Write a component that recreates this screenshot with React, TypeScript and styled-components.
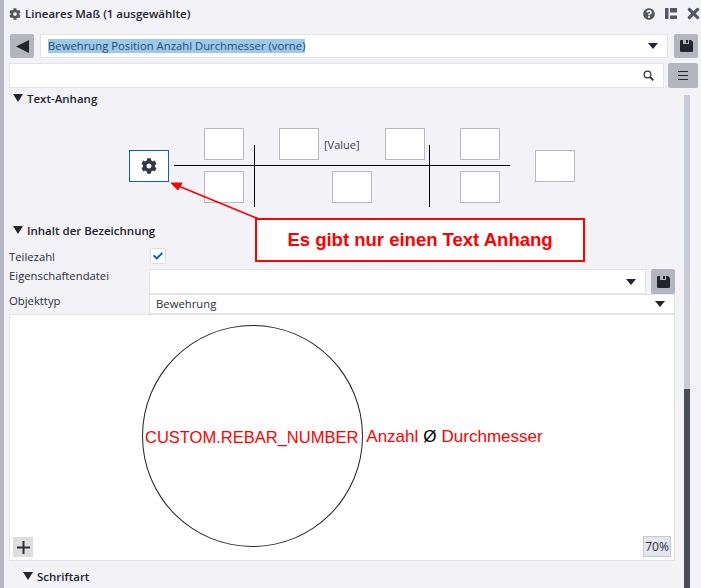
import React from "react";
import styled, { createGlobalStyle } from "styled-components";
import { FaCog, FaQuestionCircle, FaTimes, FaCheck } from "react-icons/fa";

const GlobalStyle = createGlobalStyle`
  html, body {
    margin: 0;
    padding: 0;
    background: #f2f2f7;
    overflow: hidden;
  }
  * { box-sizing: border-box; }
`;

const Window = styled.div`
  position: relative;
  width: 701px;
  height: 588px;
  overflow: hidden;
  background: #f2f2f7;
  border-left: 4px solid #b6b6c2;
  font-family: "Open Sans", "Noto Sans", sans-serif;
  font-size: 11.3px;
  color: #2b2d3a;
`;

const TitleBar = styled.div`
  height: 34px;
  padding: 0 2px 7px 5px;
  display: flex;
  align-items: center;
  gap: 4px;
  font-weight: 600;
  font-size: 11.5px;
  color: #23242e;

  svg { color: #555862; flex: none; }
`;

const TitleText = styled.span`
  flex: 1;
`;

const TitleIcons = styled.div`
  display: flex;
  align-items: center;
  gap: 10px;
  svg { display: block; }
  svg:last-child { margin: 0 -3px 0 -2px; }
`;

const SelectorRow = styled.div`
  height: 24px;
  padding: 0 3px 0 6px;
  display: flex;
  gap: 6px;
`;

const SearchRow = styled.div`
  height: 25px;
  margin-top: 5px;
  padding: 0 3px 0 5px;
  display: flex;
  gap: 4px;
`;

const SquareButton = styled.div<{ $width?: number }>`
  flex: none;
  width: ${(p) => p.$width ?? 24}px;
  display: flex;
  align-items: center;
  justify-content: center;
  border-radius: 2px;
  background: #b4b6bf;
  color: #23242e;
`;

const Field = styled.div`
  flex: 1;
  min-width: 0;
  display: flex;
  align-items: center;
  justify-content: space-between;
  background: #fff;
  border: 1px solid #e2e2ea;
  padding: 0 9px 0 7px;
`;

const Selected = styled.span`
  background: #9cc9ee;
  color: #2b4a6a;
  line-height: 14px;
`;

const FieldValue = styled.span`
  margin: -2px 0 0 -1px;
`;

const Caret = styled.span`
  width: 0;
  height: 0;
  border-left: 5px solid transparent;
  border-right: 5px solid transparent;
  border-top: 6px solid #23242e;
`;

const Content = styled.div`
  display: flex;
  height: 501px;
  margin-top: -1px;
`;

const Main = styled.div`
  width: 680px;
`;

const Scrollbar = styled.div`
  width: 6px;
  margin-top: 8px;
  height: 493px;
  display: flex;
  flex-direction: column;
  background: #c9cbd4;
  justify-content: flex-end;
`;

const ScrollThumb = styled.div`
  height: 199px;
  background: #4a4e55;
`;

const SectionHeader = styled.div<{ $indent?: number; $top?: number }>`
  height: 22px;
  margin-top: ${(p) => p.$top ?? 0}px;
  padding-left: ${(p) => p.$indent ?? 9}px;
  display: flex;
  align-items: center;
  gap: 4px;
  font-weight: 600;
  font-size: 11.5px;
  color: #23242e;
`;

const Triangle = styled.span`
  width: 0;
  height: 0;
  border-left: 5px solid transparent;
  border-right: 5px solid transparent;
  border-top: 8px solid #23242e;
`;

const Diagram = styled.div`
  position: relative;
  height: 110px;
`;

const AttachBox = styled.div<{ $x: number; $y: number }>`
  position: absolute;
  left: ${(p) => p.$x}px;
  top: ${(p) => p.$y}px;
  width: 40px;
  height: 32px;
  background: #fff;
  border: 1px solid #b8b8c2;
`;

const GearBox = styled.div`
  position: absolute;
  left: 125px;
  top: 41px;
  width: 40px;
  height: 32px;
  background: #fff;
  border: 1px solid #0f64a0;
  display: flex;
  align-items: center;
  justify-content: center;
  color: #34364a;
`;

const HLine = styled.div`
  position: absolute;
  left: 170px;
  top: 56px;
  width: 336px;
  height: 1px;
  background: #000;
`;

const VLine = styled.div<{ $x: number }>`
  position: absolute;
  left: ${(p) => p.$x}px;
  top: 36px;
  width: 1px;
  height: 62px;
  background: #000;
`;

const ValueLabel = styled.span`
  position: absolute;
  left: 320px;
  top: 28px;
  font-size: 11px;
  line-height: 16px;
  color: #3a3c50;
`;

const PropList = styled.div`
  margin-top: 9px;
`;

const PropRow = styled.div<{ $height: number }>`
  height: ${(p) => p.$height}px;
  padding-left: 5px;
  display: flex;
  align-items: flex-start;
`;

const PropLabel = styled.div`
  width: 140px;
  flex: none;
  line-height: 15px;
  margin-top: -1px;
`;

const Check = styled.div`
  margin: -2px 0 0 1px;
  width: 16px;
  height: 16px;
  background: #fff;
  border: 1px solid #dcdce4;
  border-radius: 2px;
  display: flex;
  align-items: center;
  justify-content: center;
  color: #0f64a0;
`;

const PropControl = styled.div`
  width: 526px;
  height: 100%;
  display: flex;
  gap: 5px;
`;

const Canvas = styled.div`
  position: relative;
  margin: 0 0 0 5px;
  width: 666px;
  height: 247px;
  background: #fff;
  border: 1px solid #e2e2ea;
`;

const LabelLine = styled.div`
  position: absolute;
  left: 135px;
  top: 111px;
  display: flex;
  gap: 5px;
  font-family: "Liberation Sans", Arial, sans-serif;
  font-size: 17px;
  line-height: 22px;
  color: #f00;
  white-space: nowrap;
`;

const RebarTag = styled.span`
  font-size: 16.5px;
  margin-right: 3px;
`;

const Diameter = styled.span`
  color: #000;
`;

const Circle = styled.div`
  position: absolute;
  left: 132px;
  top: 10px;
  width: 221px;
  height: 222px;
  border: 1px solid #222;
  border-radius: 50%;
`;

const AddButton = styled.div`
  position: absolute;
  left: 3px;
  bottom: 3px;
  width: 20px;
  height: 20px;
  background: #dedee0;
  display: flex;
  align-items: center;
  justify-content: center;
`;

const Zoom = styled.div`
  position: absolute;
  right: 3px;
  bottom: 3px;
  width: 28px;
  height: 21px;
  background: #e4e5ee;
  border: 1px solid #c8c9d2;
  display: flex;
  align-items: center;
  justify-content: center;
  font-size: 12px;
`;

const Callout = styled.div`
  position: absolute;
  left: 251px;
  top: 218px;
  width: 330px;
  height: 44px;
  background: #fff;
  border: 2px solid #f00;
  display: flex;
  align-items: center;
  justify-content: center;
  font-family: "Liberation Sans", Arial, sans-serif;
  font-weight: 700;
  font-size: 18.5px;
  color: #f00;
`;

const Arrow = styled.svg`
  position: absolute;
  left: 160px;
  top: 175px;
`;

const boxes: [number, number][] = [
  [200, 19], [275, 19], [381, 19], [456, 19],
  [200, 62], [328, 62], [456, 62], [531, 41],
];

const LayoutIcon = () => (
  <svg width="12" height="11" viewBox="0 0 12 11" fill="#555862">
    <rect x="0" y="0" width="3.5" height="11" />
    <rect x="5" y="0" width="7" height="4.5" />
    <rect x="5" y="7.5" width="7" height="3.5" />
  </svg>
);

const SearchIcon = () => (
  <svg width="11" height="11" viewBox="0 0 11 11" fill="none" stroke="#33353f">
    <circle cx="4.5" cy="4.5" r="3.4" strokeWidth="1.2" />
    <path d="M7 7 L10.3 10.3" strokeWidth="1.8" />
  </svg>
);

const MenuIcon = () => (
  <svg width="10" height="9" viewBox="0 0 10 9" stroke="#23242e" strokeWidth="1">
    <path d="M0 .5H10M0 4.5H10M0 8.5H10" />
  </svg>
);

const SaveIcon = () => (
  <svg width="13" height="12" viewBox="0 0 13 12" fill="#23242e" fillRule="evenodd">
    <path d="M1 0H3V4H9V0H11L13 2V11A1 1 0 0 1 12 12H1A1 1 0 0 1 0 11V1A1 1 0 0 1 1 0ZM6 0H8V3H6Z" />
  </svg>
);

const PlusIcon = () => (
  <svg width="13" height="13" viewBox="0 0 13 13" stroke="#2f3135" strokeWidth="2">
    <path d="M6.5 0V13M0 6.5H13" />
  </svg>
);

const App = () => {
  return (
    <>
      <GlobalStyle />
      <Window>
        <TitleBar>
          <FaCog size={12} />
          <TitleText>Lineares Maß (1 ausgewählte)</TitleText>
          <TitleIcons>
            <FaQuestionCircle size={12} color="#555862" />
            <LayoutIcon />
            <FaTimes size={17} color="#555862" />
          </TitleIcons>
        </TitleBar>

        <SelectorRow>
          <SquareButton>
            <svg width="13" height="13" viewBox="0 0 13 13" fill="#23242e">
              <path d="M0 6.5L13 0V13Z" />
            </svg>
          </SquareButton>
          <Field>
            <Selected>Bewehrung Position Anzahl Durchmesser (vorne)</Selected>
            <Caret />
          </Field>
          <SquareButton>
            <SaveIcon />
          </SquareButton>
        </SelectorRow>

        <SearchRow>
          <Field>
            <span />
            <SearchIcon />
          </Field>
          <SquareButton $width={30}>
            <MenuIcon />
          </SquareButton>
        </SearchRow>

        <Content>
          <Main>
            <SectionHeader>
              <Triangle />
              Text-Anhang
            </SectionHeader>
            <Diagram>
              <HLine />
              <VLine $x={250} />
              <VLine $x={425} />
              {boxes.map(([x, y]) => (
                <AttachBox key={`${x}-${y}`} $x={x} $y={y} />
              ))}
              <GearBox>
                <FaCog size={16} />
              </GearBox>
              <ValueLabel>[Value]</ValueLabel>
            </Diagram>
            <SectionHeader>
              <Triangle />
              Inhalt der Bezeichnung
            </SectionHeader>
            <PropList>
              <PropRow $height={19}>
                <PropLabel>Teilezahl</PropLabel>
                <Check>
                  <FaCheck size={10} />
                </Check>
              </PropRow>
              <PropRow $height={25}>
                <PropLabel>Eigenschaftendatei</PropLabel>
                <PropControl>
                  <Field>
                    <span />
                    <Caret />
                  </Field>
                  <SquareButton>
                    <SaveIcon />
                  </SquareButton>
                </PropControl>
              </PropRow>
              <PropRow $height={20}>
                <PropLabel>Objekttyp</PropLabel>
                <PropControl>
                  <Field>
                    <FieldValue>Bewehrung</FieldValue>
                    <Caret />
                  </Field>
                </PropControl>
              </PropRow>
            </PropList>
            <Canvas>
              <Circle />
              <LabelLine>
                <RebarTag>CUSTOM.REBAR_NUMBER</RebarTag>
                <span>Anzahl</span>
                <Diameter>Ø</Diameter>
                <span>Durchmesser</span>
              </LabelLine>
              <AddButton>
                <PlusIcon />
              </AddButton>
              <Zoom>70%</Zoom>
            </Canvas>
            <SectionHeader $indent={19} $top={4}>
              <Triangle />
              Schriftart
            </SectionHeader>
          </Main>
          <Scrollbar>
            <ScrollThumb />
          </Scrollbar>
        </Content>

        <Callout>Es gibt nur einen Text Anhang</Callout>
        <Arrow width="100" height="50" viewBox="0 0 100 50">
          <path d="M95 44 L12 10" stroke="#f00" strokeWidth="1.6" fill="none" />
          <path d="M7 8 L18 8 L14 15 Z" fill="#f00" stroke="#f00" />
        </Arrow>
      </Window>
    </>
  );
};

export default App;
